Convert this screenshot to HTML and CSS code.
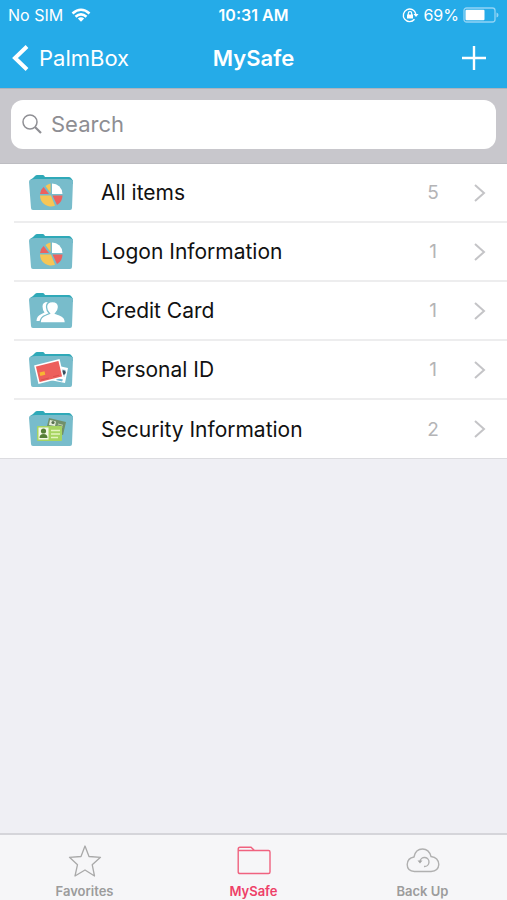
FILE: index.html
```html
<!DOCTYPE html>
<html lang="en">
<head>
<meta charset="utf-8">
<meta name="viewport" content="width=device-width, initial-scale=1">
<title>MySafe</title>
<link rel="stylesheet" href="styles.css">
</head>
<body>
<svg class="defs" aria-hidden="true">
  <symbol id="folder" viewBox="0 0 44 36">
    <path d="M1 5 4 3 6 1Q7 0 8 0h6q1 0 2 2h24q2 0 4 4v3H1z" fill="#2fa9b8"/>
    <path d="M1 5q3-1 6-1L38 4q5 0 6 2L43 33q0 2-2 2H4q-2 0-2-2L0 7q0-2 1-2z" fill="#78bccb"/>
  </symbol>
  <symbol id="pie" viewBox="0 0 44 36">
    <path d="M23 19V8.500A10.500 10.500 0 0 1 33.500 19z" fill="#fff"/>
    <path d="M23.500 20.500H33.500A11 11 0 0 1 28 30z" fill="#ec625f"/>
    <path d="M22 20.500 26 30.800A11 11 0 0 1 11 20.500z" fill="#f6c656"/>
    <path d="M20 19H11A11 11 0 0 1 14.500 12z" fill="#ec625f"/>
    <path d="M21.500 18 16.500 11A11 11 0 0 1 21.500 8.500z" fill="#f6c656"/>
  </symbol>
  <symbol id="chevron" viewBox="0 0 12 20">
    <path d="M1 2 10 10 1 18" fill="none" stroke="#c4c4c7" stroke-width="2"/>
  </symbol>
</svg>
<div class="screen">
  <header class="top">
    <div class="status">
      <div class="status-side">
        <span>No SIM</span>
        <svg class="wifi" width="20" height="14" viewBox="0 0 20 14" fill="none" stroke="#fff" stroke-width="2.600" aria-hidden="true">
          <path d="M1.500 5.500Q10-2 18.500 5.500M4.500 8.700Q10 4 15.500 8.700"/>
          <path d="M6.800 10.500Q10 8 13.200 10.500L10 13.700z" fill="#fff" stroke="none"/>
        </svg>
      </div>
      <strong class="clock">10:31 AM</strong>
      <div class="status-side status-right">
        <svg width="17" height="16" viewBox="0 0 17 16" fill="none" stroke="#fff" stroke-width="1.400" aria-hidden="true">
          <path d="M12.500 12.300A6.300 6.300 0 1 1 13.800 7"/>
          <path d="M11.500 7H16.500L14 10z" fill="#fff" stroke="none"/>
          <path d="M5 7.500h6v4H5z" fill="#fff" stroke="none"/>
          <path d="M6.300 8V6.300a1.700 1.700 0 0 1 3.400 0V8" stroke-width="1.200"/>
        </svg>
        <span>69%</span>
        <svg width="36" height="16" viewBox="0 0 36 16" aria-hidden="true">
          <rect x="1" y="1" width="31" height="14" rx="2.500" fill="none" stroke="#92d4f5" stroke-width="1.300"/>
          <rect x="2.500" y="2.800" width="19" height="10.400" rx="1" fill="#fff"/>
          <path d="M33.500 5.500q2 .5 2 2.500t-2 2.500z" fill="#92d4f5"/>
        </svg>
      </div>
    </div>
    <nav class="bar">
      <a class="back" href="#">
        <svg width="17" height="28" viewBox="0 0 17 28" aria-hidden="true"><path d="M15 2.500 3 14 15 25.500" fill="none" stroke="#fff" stroke-width="4"/></svg>
        <span>PalmBox</span>
      </a>
      <h1>MySafe</h1>
      <button class="add" type="button" aria-label="Add">
        <svg width="24" height="26" viewBox="0 0 24 26" aria-hidden="true"><path d="M12 1v24M0 13h24" stroke="#fff" stroke-width="2.400"/></svg>
      </button>
    </nav>
  </header>
  <form class="search" role="search">
    <label class="field">
      <svg width="20" height="20" viewBox="0 0 20 20" fill="none" stroke="#8f8f94" aria-hidden="true"><circle cx="8" cy="8" r="7" stroke-width="1.500"/><path d="M13 13 19 19" stroke-width="2.200"/></svg>
      <input type="text" placeholder="Search" aria-label="Search">
    </label>
  </form>
  <main>
    <ul class="list">
      <li><a class="row" href="#">
        <svg class="icon" viewBox="0 0 44 36" aria-hidden="true"><use href="#folder"/><use href="#pie"/></svg>
        <span class="name">All items</span><span class="count">5</span>
        <svg class="go" aria-hidden="true"><use href="#chevron"/></svg>
      </a></li>
      <li><a class="row" href="#">
        <svg class="icon" viewBox="0 0 44 36" aria-hidden="true"><use href="#folder"/><use href="#pie"/></svg>
        <span class="name">Logon Information</span><span class="count">1</span>
        <svg class="go" aria-hidden="true"><use href="#chevron"/></svg>
      </a></li>
      <li><a class="row" href="#">
        <svg class="icon" viewBox="0 0 44 36" aria-hidden="true"><use href="#folder"/>
          <path d="M7.500 28q0-5 5-7l3-1.500q-2-2.500-2-6 0-4.500 5-4.500 5 0 5 5v14z" fill="#fff"/>
          <path d="M11 30q0-6 6-8l3.500-1.500q-3-3-3-6.500 0-5.500 6-5.500t6 5.500q0 3.500-3 6.500l4 1.500q6 2 6 8z" fill="#fff" stroke="#78bccb" stroke-width="1.300"/>
        </svg>
        <span class="name">Credit Card</span><span class="count">1</span>
        <svg class="go" aria-hidden="true"><use href="#chevron"/></svg>
      </a></li>
      <li><a class="row" href="#">
        <svg class="icon" viewBox="0 0 44 36" aria-hidden="true"><use href="#folder"/>
          <path d="M25 13 39 16 36 31 21 28z" fill="#fff"/>
          <path d="M32 17 37 18 35.500 25 31 24z" fill="#b9dce8"/>
          <circle cx="34.500" cy="20.500" r="2.200" fill="#3c4b5b"/>
          <path d="M28 26 34 27.500 33 29.500 27 28z" fill="#71b7d3"/>
          <path d="M6 14 30 8 34 25 10 31z" fill="#ed5f5c" stroke="#fff" stroke-width="1.500"/>
          <path d="M10.500 20.500 15.500 19.300 16.300 22.800 11.300 24z" fill="#f7b633"/>
          <path d="M12 28 20 26M24 24.700 30 23.200" stroke="#d9504e" stroke-width="1"/>
        </svg>
        <span class="name">Personal ID</span><span class="count">1</span>
        <svg class="go" aria-hidden="true"><use href="#chevron"/></svg>
      </a></li>
      <li><a class="row" href="#">
        <svg class="icon" viewBox="0 0 44 36" aria-hidden="true"><use href="#folder"/>
          <path d="M20 7 37 11 34 24 17 19z" fill="#71906a"/>
          <path d="M21 9 27 10.500 26 15 20 14z" fill="#e6edda"/>
          <circle cx="24" cy="11.500" r="1.600" fill="#566e4e"/>
          <path d="M29 13 34 14.300M28.500 15 33.500 16" stroke="#c5d5b3" stroke-width="1"/>
          <rect x="8" y="15" width="25" height="15" rx="1" fill="#a6d461"/>
          <rect x="9.500" y="16.500" width="10" height="12" fill="#f4f8e7"/>
          <circle cx="14.500" cy="20" r="2.600" fill="#557f37"/>
          <path d="M10.500 27q0-4 4-4t4 4z" fill="#557f37"/>
          <path d="M22 19.500h9M22 23h9M22 26.500h7" stroke="#e3f3bd" stroke-width="1.400"/>
        </svg>
        <span class="name">Security Information</span><span class="count">2</span>
        <svg class="go" aria-hidden="true"><use href="#chevron"/></svg>
      </a></li>
    </ul>
  </main>
  <nav class="tabs">
    <a class="tab" href="#">
      <svg width="34" height="32" viewBox="0 0 34 32" fill="none" stroke="#a9a9a9" stroke-width="1.300" stroke-linejoin="round" aria-hidden="true"><path d="M17 1 21 11.500 32.500 12.300 24.200 19.700 26.500 31 17 25 7 31 9.500 19.700 1.500 12.300 13 11.500z"/></svg>
      <span>Favorites</span>
    </a>
    <a class="tab active" href="#" aria-current="page">
      <svg width="34" height="32" viewBox="0 0 34 32" fill="none" stroke="#f0627f" stroke-width="1.400" aria-hidden="true"><path d="M3 2.200H14L17.500 5.500H31.500Q33 5.500 33 7V27Q33 28.500 31.500 28.500H3Q1.200 28.500 1.200 27V4Q1.200 2.200 3 2.200zM1.200 5.500H17.500"/></svg>
      <span>MySafe</span>
    </a>
    <a class="tab" href="#">
      <svg width="34" height="32" viewBox="0 0 34 32" fill="none" stroke="#b0b0b0" stroke-width="1.400" aria-hidden="true"><path d="M8.500 26.500Q1.200 26 1.200 19.500 1.500 13 8 12 9.500 4 16.500 4 23 4 25 11.500 32.500 12.500 32.800 19.500 32.500 26 25 26.500z"/><path d="M14 16.500A4.500 4.500 0 1 1 18 21.500"/><path d="M11.500 15.500h5l-2.500 3z" fill="#a5a5a5" stroke="none"/></svg>
      <span>Back Up</span>
    </a>
  </nav>
</div>
</body>
</html>
```
FILE: styles.css
```css
* { box-sizing: border-box; }
body {
  margin: 0;
  font-family: Inter, "Liberation Sans", sans-serif;
  background: #efeff4;
  color: #111;
}
a { color: inherit; text-decoration: none; }
.defs { display: none; }
svg { display: block; flex: none; }
.screen {
  min-height: 100vh;
  display: flex;
  flex-direction: column;
}
.top {
  background: #25abe8;
  color: #fff;
}
.status {
  display: grid;
  grid-template-columns: 1fr auto 1fr;
  align-items: center;
  height: 30px;
  padding: 0 8px;
  font-size: 16px;
}
.status-side {
  display: flex;
  align-items: center;
  gap: 8px;
}
.status-right { gap: 4px; justify-content: flex-end; }
.clock { font-weight: 600; }
.bar {
  display: grid;
  grid-template-columns: 1fr auto 1fr;
  align-items: center;
  height: 58px;
  padding: 0 12px 2px;
}
.back {
  display: flex;
  align-items: center;
  gap: 10px;
  font-size: 22px;
}
h1 {
  margin: 0;
  font-size: 22px;
  font-weight: 600;
}
.add {
  justify-self: end;
  margin-right: 9px;
  padding: 0;
  border: 0;
  background: none;
}
.search {
  height: 76px;
  padding: 11px 11px 14px;
  background: #c8c7cc;
  border-bottom: 1px solid #bdbdc2;
  border-top: 1px solid #aeb3bc;
}
.field {
  display: flex;
  align-items: center;
  gap: 9px;
  height: 49px;
  padding: 0 11px 2px;
  border-radius: 12px;
  background: #fff;
}
.field input {
  flex: 1;
  min-width: 0;
  padding: 0;
  border: 0;
  outline: 0;
  background: none;
  font: inherit;
  font-size: 22px;
}
.field input::placeholder { color: #8e8e93; opacity: 1; }
main { flex: 1; }
.list {
  margin: 0;
  padding: 0 0 0 14px;
  list-style: none;
  background: #fff;
  border-bottom: 1px solid #dcdce0;
}
.row {
  display: flex;
  align-items: center;
  height: 59px;
  padding: 0 21px 0 15px;
  border-bottom: 2px solid #ededee;
}
li:last-child .row { height: 58px; border-bottom: 0; }
.icon { width: 44px; height: 36px; }
.name {
  flex: 1;
  margin-left: 28px;
  font-size: 21px;
}
.count {
  width: 12px;
  margin-right: 35px;
  text-align: center;
  font-size: 19px;
  color: #b4b4b6;
}
.go { width: 12px; height: 20px; }
.tabs {
  display: grid;
  grid-template-columns: repeat(3, 1fr);
  height: 67px;
  padding: 10px 0 0;
  border-top: 2px solid #d5d5da;
  background: #f6f6f8;
}
.tab {
  display: flex;
  flex-direction: column;
  align-items: center;
  gap: 5px;
  font-size: 13px;
  line-height: 18px;
  font-weight: 600;
  color: #9c9c9c;
}
.active { color: #ee3f68; }
```
